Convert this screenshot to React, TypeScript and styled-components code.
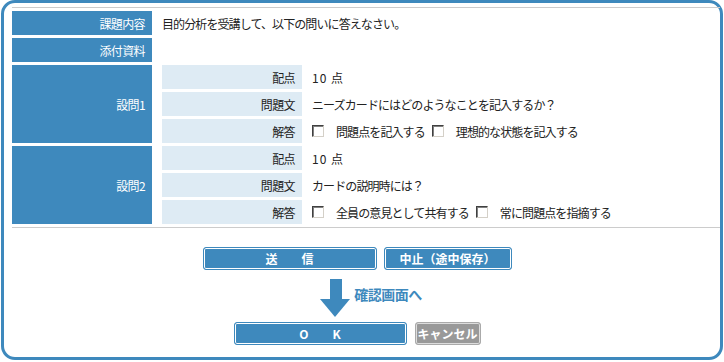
import React from "react";
import styled, { createGlobalStyle } from "styled-components";

const GlobalStyle = createGlobalStyle`
  html, body {
    margin: 0;
    padding: 0;
    background: #ffffff;
  }
  body {
    font-family: "Noto Sans CJK JP", "Liberation Sans", sans-serif;
    font-size: 12px;
    color: #222222;
  }
`;

const BLUE = "#3e89bd";

type SubItem = { label: string; value?: string; score?: boolean; choices?: string[] };
type Question = { name: string; items: SubItem[] };

const questions: Question[] = [
  {
    name: "設問1",
    items: [
      { label: "配点", value: "10 点", score: true },
      { label: "問題文", value: "ニーズカードにはどのようなことを記入するか？" },
      { label: "解答", choices: ["問題点を記入する", "理想的な状態を記入する"] },
    ],
  },
  {
    name: "設問2",
    items: [
      { label: "配点", value: "10 点", score: true },
      { label: "問題文", value: "カードの説明時には？" },
      { label: "解答", choices: ["全員の意見として共有する", "常に問題点を指摘する"] },
    ],
  },
];

const App: React.FC = () => {
  return (
    <>
      <GlobalStyle />
      <Panel>
        <Table>
          <Row>
            <Head>課題内容</Head>
            <Value>目的分析を受講して、以下の問いに答えなさい。</Value>
          </Row>
          <Row>
            <Head>添付資料</Head>
            <Value />
          </Row>
          {questions.map((q) => (
            <Row key={q.name}>
              <Head $tall>{q.name}</Head>
              <SubList>
                {q.items.map((item) => (
                  <SubRow key={item.label}>
                    <SubHead>{item.label}</SubHead>
                    <Value $spaced={item.score}>
                      {item.value}
                      {item.choices &&
                        item.choices.map((c) => (
                          <Choice key={c}>
                            <Check type="checkbox" />
                            <ChoiceLabel>{c}</ChoiceLabel>
                          </Choice>
                        ))}
                    </Value>
                  </SubRow>
                ))}
              </SubList>
            </Row>
          ))}
        </Table>

        <Actions>
          <ButtonRow>
            <BlueButton $width={174}>送　　信</BlueButton>
            <BlueButton $width={128}>中止（途中保存）</BlueButton>
          </ButtonRow>
          <ArrowRow>
            <svg width="30" height="38" viewBox="0 0 30 38">
              <rect x="10" y="0" width="12" height="20" fill={BLUE} />
              <polygon points="0,20 30,20 15,38" fill={BLUE} />
            </svg>
            <ArrowText>確認画面へ</ArrowText>
          </ArrowRow>
          <ButtonRow>
            <BlueButton $width={173}>O　　K</BlueButton>
            <GrayButton>キャンセル</GrayButton>
          </ButtonRow>
        </Actions>
      </Panel>
    </>
  );
};

export default App;

const Panel = styled.div`
  box-sizing: border-box;
  width: 722px;
  height: 360px;
  margin-left: 1px;
  border: 3px solid ${BLUE};
  border-radius: 14px;
  padding: 4px 0 0 8px;
  display: flex;
  flex-direction: column;
`;

const Table = styled.div`
  display: flex;
  flex-direction: column;
  gap: 3px;
  padding: 3px 0 3px 0;
  border-top: 1px solid #cccccc;
  border-bottom: 1px solid #cccccc;
`;

const Row = styled.div`
  display: grid;
  grid-template-columns: 140px 1fr;
  column-gap: 10px;
`;

const Head = styled.div<{ $tall?: boolean }>`
  background: ${BLUE};
  color: #ffffff;
  height: ${(p) => (p.$tall ? "78px" : "24px")};
  display: flex;
  align-items: center;
  justify-content: flex-end;
  padding-right: 7px;
  letter-spacing: -0.6px;
`;

const SubList = styled.div`
  display: flex;
  flex-direction: column;
  gap: 3px;
`;

const SubRow = styled.div`
  display: grid;
  grid-template-columns: 140px 1fr;
  column-gap: 10px;
`;

const SubHead = styled.div`
  background: #deebf4;
  height: 24px;
  display: flex;
  align-items: center;
  justify-content: flex-end;
  padding-right: 7px;
  letter-spacing: -0.6px;
`;

const Value = styled.div<{ $spaced?: boolean }>`
  height: 24px;
  display: flex;
  align-items: center;
  letter-spacing: ${(p) => (p.$spaced ? "1px" : "-0.9px")};
  white-space: pre;
`;

const Choice = styled.label`
  display: inline-flex;
  align-items: center;
`;

const Check = styled.input`
  appearance: none;
  box-sizing: border-box;
  width: 12px;
  height: 12px;
  margin: 0 12px 0 0;
  background: #ffffff;
  border: 1px solid;
  border-color: #404040 #d4d0c8 #d4d0c8 #404040;
  box-shadow: inset 1px 1px 0 #808080;
`;

const ChoiceLabel = styled.span`
  margin-right: 7px;
`;

const Actions = styled.div`
  display: flex;
  flex-direction: column;
  align-items: center;
  padding: 19px 18px 0 0;
`;

const ButtonRow = styled.div`
  display: flex;
  gap: 7px;
`;

const BaseButton = styled.button`
  box-sizing: border-box;
  height: 23px;
  border-radius: 3px;
  color: #ffffff;
  font-family: "Noto Sans CJK JP", "Liberation Sans", sans-serif;
  font-weight: bold;
  font-size: 12px;
  padding: 0;
  display: flex;
  align-items: center;
  justify-content: center;
  cursor: pointer;
`;

const BlueButton = styled(BaseButton)<{ $width: number }>`
  width: ${(p) => p.$width}px;
  background: ${BLUE};
  border: 1px solid ${BLUE};
  box-shadow: inset 0 0 0 1px #ffffff;
`;

const GrayButton = styled(BaseButton)`
  width: 66px;
  margin-left: 1px;
  background: #999999;
  border: 1px solid #aaaaaa;
  box-shadow: inset 0 0 0 1px #dddddd;
`;

const ArrowRow = styled.div`
  display: flex;
  align-items: flex-start;
  gap: 4px;
  margin: 9px 0 5px 28px;
`;

const ArrowText = styled.div`
  color: ${BLUE};
  font-weight: bold;
  font-size: 14px;
  line-height: 14px;
  margin-top: 8px;
  letter-spacing: -0.5px;
`;
